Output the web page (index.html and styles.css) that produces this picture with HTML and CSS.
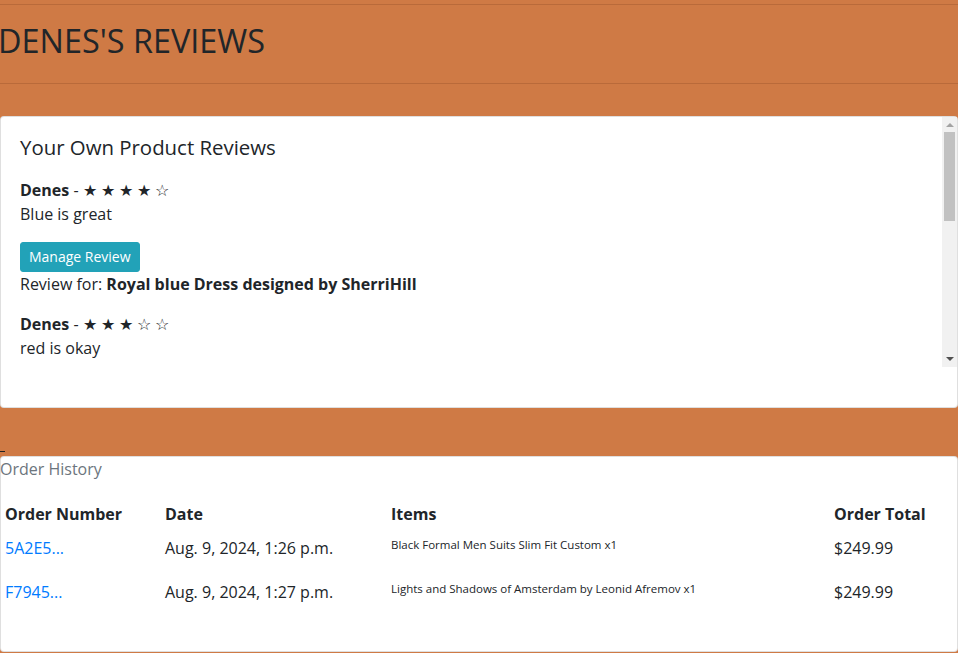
FILE: index.html
```html
<!DOCTYPE html>
<html lang="en">
<head>
    <meta charset="UTF-8">
    <title>Denes's Reviews</title>
    <link rel="stylesheet" href="styles.css">
</head>
<body>

<div class="page-header">
    <h1 class="page-title">DENES'S REVIEWS</h1>
</div>

<div class="card reviews-card">
    <div class="reviews-scroll">
        <h5 class="card-title">Your Own Product Reviews</h5>

        <div class="review">
            <div><b>Denes</b> - ★ ★ ★ ★ ☆</div>
            <p class="review-text">Blue is great</p>
            <button class="btn-manage">Manage Review</button>
            <p class="review-for">Review for: <b>Royal blue Dress designed by SherriHill</b></p>
        </div>

        <div class="review">
            <div><b>Denes</b> - ★ ★ ★ ☆ ☆</div>
            <p class="review-text">red is okay</p>
            <button class="btn-manage">Manage Review</button>
            <p class="review-for">Review for: <b>Red Evening Gown designed by SherriHill</b></p>
        </div>
    </div>
    <div class="scrollbar">
        <span class="arrow-up"></span>
        <div class="scroll-track"><div class="scroll-thumb"></div></div>
        <span class="arrow-down"></span>
    </div>
</div>

<div class="spacer"><span class="dash"></span></div>

<div class="card orders-card">
    <div class="orders-title">Order History</div>
    <table class="orders">
        <colgroup>
            <col style="width: 160px">
            <col style="width: 226px">
            <col style="width: 443px">
            <col>
        </colgroup>
        <thead>
            <tr>
                <th>Order Number</th>
                <th>Date</th>
                <th>Items</th>
                <th>Order Total</th>
            </tr>
        </thead>
        <tbody>
            <tr>
                <td><a href="#">5A2E5...</a></td>
                <td>Aug. 9, 2024, 1:26 p.m.</td>
                <td><p class="item">Black Formal Men Suits Slim Fit Custom x1</p></td>
                <td>$249.99</td>
            </tr>
            <tr>
                <td><a href="#">F7945...</a></td>
                <td>Aug. 9, 2024, 1:27 p.m.</td>
                <td><p class="item">Lights and Shadows of Amsterdam by Leonid Afremov x1</p></td>
                <td>$249.99</td>
            </tr>
        </tbody>
    </table>
</div>

</body>
</html>
```

FILE: styles.css
```css
body {
    font-family: "Open Sans", sans-serif;
    font-size: 16px;
    line-height: 1.5;
    color: #212529;
    background-color: #cf7a45;
    margin: 0;
}
.page-header {
    margin-top: 4px;
    border-top: 1px solid #b96a3a;
    border-bottom: 1px solid #b96a3a;
    padding: 16px 0 24px;
}
.page-title {
    margin: 0 0 0 -2px;
    font-size: 32.4px;
    font-weight: 400;
    line-height: 38px;
}
.card {
    background-color: #fff;
    border: 1px solid rgba(0, 0, 0, 0.125);
    border-radius: 4px;
}
.reviews-card {
    position: relative;
    margin-top: 32px;
    height: 290px;
}
.reviews-scroll {
    height: 250px;
    overflow: hidden;
    padding: 20px 34px 20px 19px;
    box-sizing: border-box;
}
.scrollbar {
    position: absolute;
    top: 0;
    right: 0;
    width: 15px;
    height: 250px;
    background-color: #f1f1f1;
    display: flex;
    flex-direction: column;
    align-items: center;
}
.arrow-up,
.arrow-down {
    width: 0;
    height: 0;
    border-left: 4px solid transparent;
    border-right: 4px solid transparent;
}
.arrow-up {
    margin-top: 6px;
    border-bottom: 4px solid #a3a3a3;
}
.arrow-down {
    margin-bottom: 6px;
    border-top: 4px solid #505050;
}
.scroll-track {
    flex: 1;
    width: 100%;
    padding: 5px 2px;
    box-sizing: border-box;
}
.scroll-thumb {
    height: 89px;
    background-color: #c1c1c1;
}
.card-title {
    margin: -2px 0 19px;
    font-size: 20.4px;
    font-weight: 400;
    line-height: 24px;
}
.review {
    margin-bottom: 16px;
}
.review-text {
    margin: 0 0 16px;
}
.btn-manage {
    font-family: inherit;
    font-size: 14px;
    line-height: 20px;
    height: 30px;
    padding: 4px 8px;
    color: #fff;
    background-color: #22a2b8;
    border: 1px solid #22a2b8;
    border-radius: 3px;
    cursor: pointer;
}
.review-for {
    margin: 0;
}
.spacer {
    height: 48px;
    position: relative;
}
.dash {
    position: absolute;
    left: 0;
    top: 43px;
    width: 5px;
    height: 1px;
    background-color: #222;
}
.orders-card {
    height: 194px;
}
.orders-title {
    margin-left: -1px;
    color: #6c757d;
}
.orders {
    width: 100%;
    margin-top: 16px;
    border-collapse: collapse;
    table-layout: fixed;
}
.orders th,
.orders td {
    padding: 5px 4px;
    text-align: left;
    vertical-align: top;
}
.orders a {
    color: #007bff;
    text-decoration: none;
}
.item {
    margin: 0 0 16px;
    font-size: 11.5px;
    line-height: 18px;
}
```
